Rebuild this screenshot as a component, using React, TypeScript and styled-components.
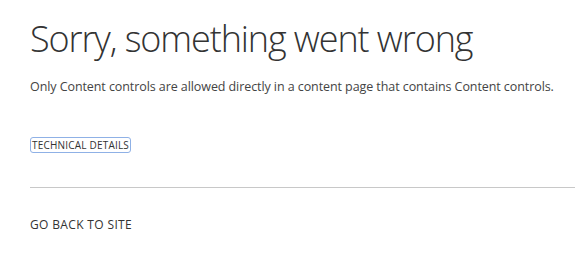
import React from 'react';
import styled, { createGlobalStyle } from 'styled-components';

const GlobalStyle = createGlobalStyle`
  html, body {
    margin: 0;
    padding: 0;
    background: #ffffff;
  }
  body {
    font-family: 'Open Sans', 'Liberation Sans', sans-serif;
    color: #333333;
  }
`;

const Page = styled.div`
  padding: 0 0 0 30px;
  overflow: hidden;
`;

const Title = styled.h1`
  margin: 0;
  padding-top: 15px;
  font-family: 'Open Sans', sans-serif;
  font-weight: 300;
  font-size: 36px;
  line-height: 48px;
  color: #333333;
  letter-spacing: -1.1px;
`;

const Message = styled.p`
  margin: 15px 0 0;
  font-size: 12.5px;
  line-height: 18px;
  color: #444444;
  letter-spacing: -0.08px;
`;

const DetailsLink = styled.a`
  display: inline-block;
  margin-top: 41px;
  padding: 0 1px;
  font-size: 10px;
  line-height: 14px;
  color: #333333;
  text-decoration: none;
  border: 1px solid #8fb1e6;
  border-radius: 3px;
  letter-spacing: 0.2px;
`;

const Divider = styled.hr`
  margin: 33px 0 0;
  border: none;
  border-top: 1px solid #c8c8c8;
  height: 0;
`;

const BackLink = styled.a`
  display: block;
  margin-top: 29px;
  font-size: 12px;
  line-height: 16px;
  color: #333333;
  text-decoration: none;
  letter-spacing: 0.35px;
`;

export default function App() {
  return (
    <>
      <GlobalStyle />
      <Page>
        <Title>Sorry, something went wrong</Title>
        <Message>Only Content controls are allowed directly in a content page that contains Content controls.</Message>
        <DetailsLink href="#">TECHNICAL DETAILS</DetailsLink>
        <Divider />
        <BackLink href="#">GO BACK TO SITE</BackLink>
      </Page>
    </>
  );
}
